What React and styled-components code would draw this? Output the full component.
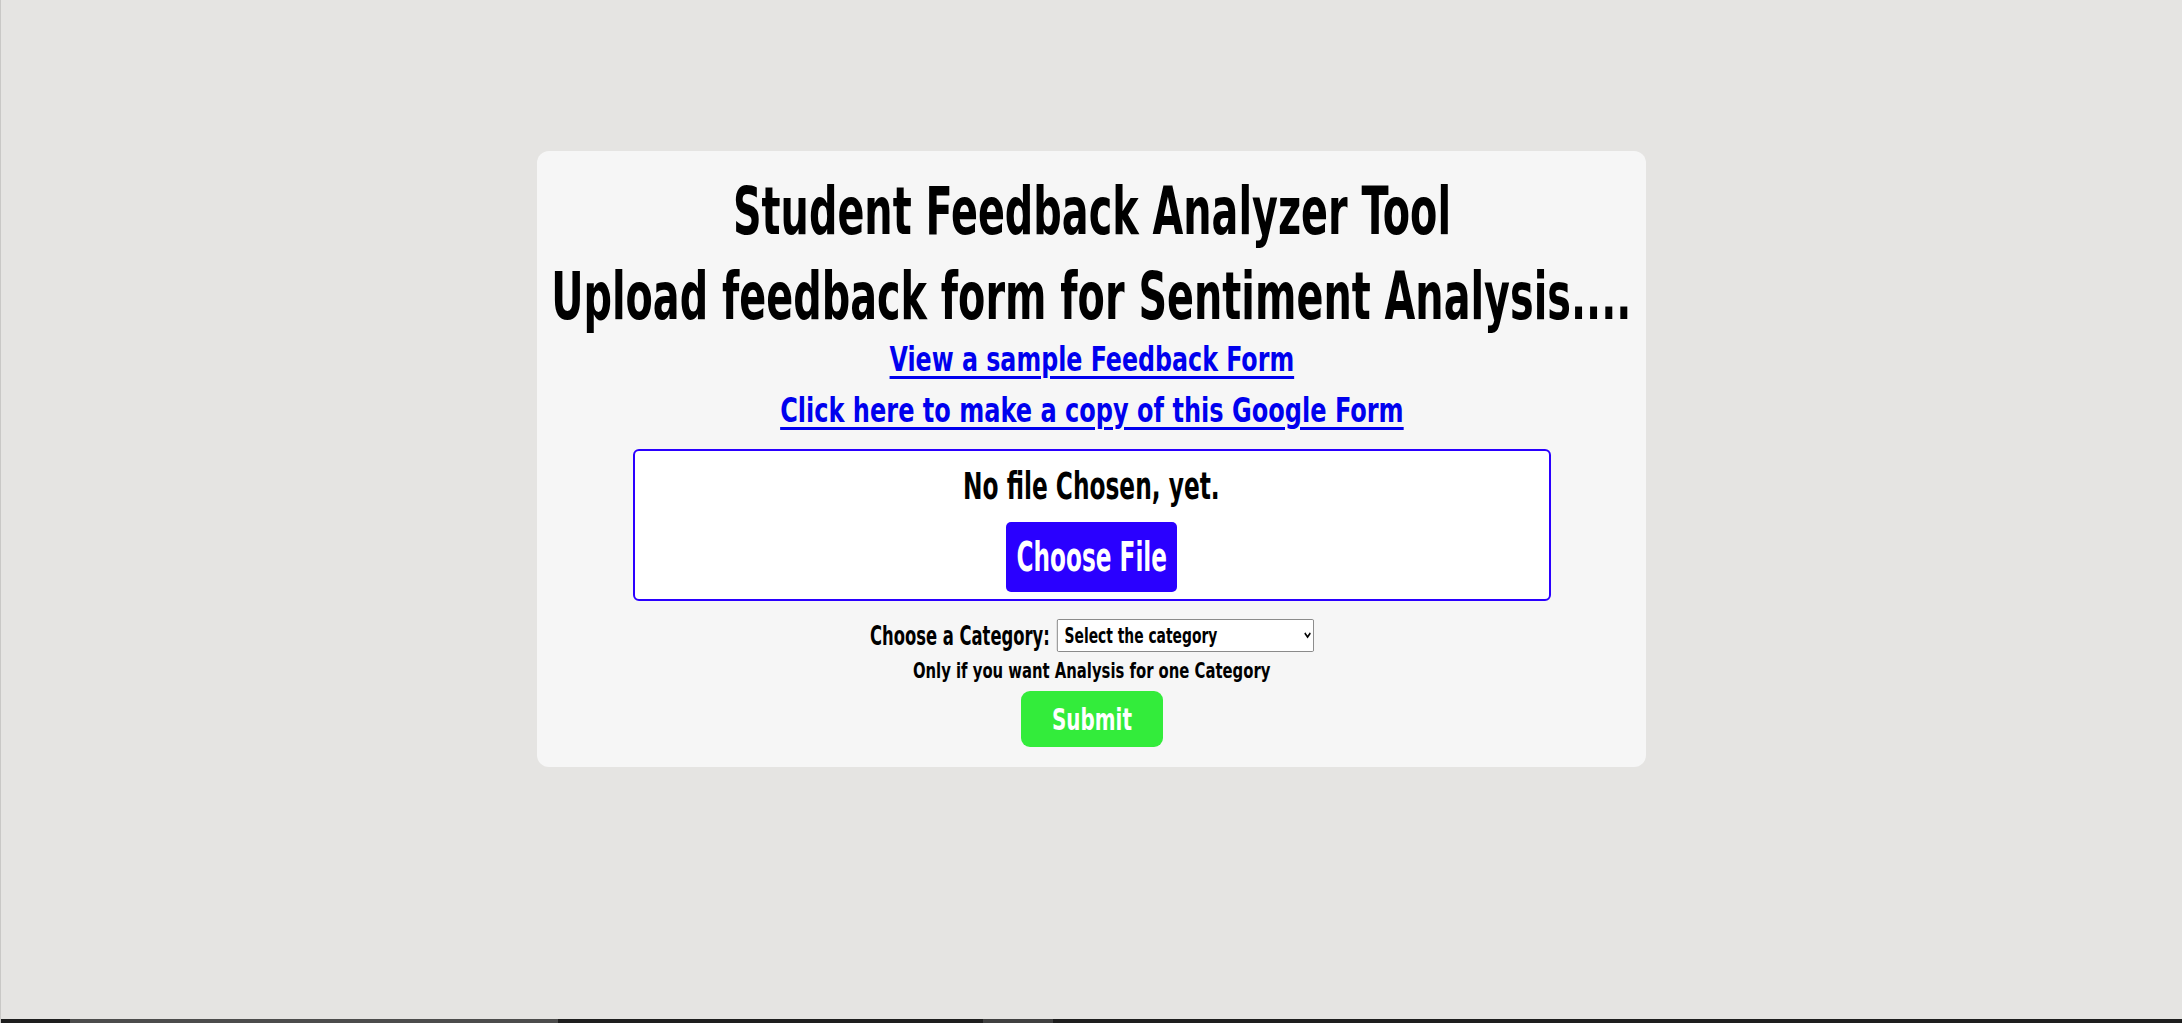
import React from "react";
import styled, { createGlobalStyle } from "styled-components";

// Oswald is not installed, so DejaVu Sans Condensed Bold is sized to the
// reference cap heights and squeezed horizontally with scaleX.
const Global = createGlobalStyle`
  html, body {
    margin: 0;
    padding: 0;
  }
  body {
    background: #e5e4e2;
    font-family: "DejaVu Sans Condensed", "DejaVu Sans", sans-serif;
    font-weight: 700;
  }
`;

const Page = styled.div`
  height: 100vh;
  display: flex;
  flex-direction: column;
  border-left: 1px solid #c9c8c6;
  box-sizing: border-box;
  overflow: hidden;
`;

const Main = styled.main`
  flex: 1;
  display: flex;
  justify-content: center;
  align-items: flex-start;
  padding-top: 151px;
`;

const Card = styled.div`
  width: 1109px;
  box-sizing: border-box;
  background: #f6f6f6;
  border-radius: 12px;
  padding: 18px 0 20px;
  display: flex;
  flex-direction: column;
  align-items: center;
  text-align: center;
`;

const Title = styled.h1`
  margin: 0;
  font-size: 65px;
  line-height: 85px;
  font-weight: 700;
  color: #000;
  white-space: nowrap;
  transform: scaleX(0.68);
`;

const Links = styled.div`
  display: flex;
  flex-direction: column;
  align-items: center;
  gap: 11px;
  margin-top: 1px;
`;

const Link = styled.a`
  font-size: 33px;
  line-height: 40px;
  font-weight: 700;
  color: #0000ee;
  white-space: nowrap;
  text-decoration: underline;
  text-decoration-thickness: 3px;
  text-underline-offset: 5px;
  transform: scaleX(${(p) => p.k});
`;

const Upload = styled.div`
  margin-top: 18px;
  width: 918px;
  box-sizing: border-box;
  border: 2px solid #2a00ff;
  border-radius: 6px;
  background: #fff;
  padding: 17px 0 7px;
  display: flex;
  flex-direction: column;
  align-items: center;
  gap: 17px;
`;

const FileStatus = styled.div`
  font-size: 37px;
  line-height: 37px;
  color: #000;
  white-space: nowrap;
  transform: scaleX(0.7);
`;

const FileButton = styled.label`
  width: 171px;
  height: 70px;
  border-radius: 5px;
  background: #2a00ff;
  color: #fff;
  font-size: 40px;
  display: flex;
  align-items: center;
  justify-content: center;
  cursor: pointer;
`;

const Squeeze = styled.span`
  display: inline-block;
  white-space: nowrap;
  transform: scaleX(${(p) => p.k});
`;

const CategoryRow = styled.div`
  margin-top: 18px;
  height: 33px;
  display: flex;
  align-items: center;
  gap: 10px;
  transform: scaleX(0.7);
`;

const Label = styled.label`
  font-size: 26px;
  color: #000;
  white-space: nowrap;
`;

const Select = styled.select`
  width: 367px;
  height: 33px;
  font-family: inherit;
  font-size: 22px;
  font-weight: 700;
  color: #000;
  background: #fff;
  border: 1px solid #767676;
  border-radius: 2px;
  padding: 0 6px;
`;

const Note = styled.p`
  margin: 8px 0 0;
  font-size: 21px;
  line-height: 22px;
  color: #000;
  white-space: nowrap;
  transform: scaleX(0.785);
`;

const Submit = styled.button`
  margin-top: 9px;
  width: 142px;
  height: 56px;
  border: none;
  border-radius: 9px;
  background: #33ec3b;
  color: #fff;
  font-family: inherit;
  font-size: 31px;
  font-weight: 700;
  padding: 0;
  cursor: pointer;
`;

const Scrollbar = styled.div`
  height: 4px;
  flex-shrink: 0;
  background: #1e1e1e;
  display: flex;
`;

const Thumb = styled.div`
  width: ${(p) => p.w}px;
  margin-left: ${(p) => p.at}px;
  background: ${(p) => p.c};
`;

const App = () => {
  return (
    <Page>
      <Global />
      <Main>
        <Card>
          <Title>Student Feedback Analyzer Tool</Title>
          <Title>Upload feedback form for Sentiment Analysis....</Title>
          <Links>
            <Link href="#" k={0.8}>View a sample Feedback Form</Link>
            <Link href="#" k={0.81}>Click here to make a copy of this Google Form</Link>
          </Links>
          <Upload>
            <FileStatus>No file Chosen, yet.</FileStatus>
            <FileButton>
              <Squeeze k={0.645}>Choose File</Squeeze>
            </FileButton>
          </Upload>
          <CategoryRow>
            <Label htmlFor="cat">Choose a Category:</Label>
            <Select id="cat" defaultValue="">
              <option value="">Select the category</option>
              <option value="teaching">Teaching</option>
              <option value="course">Course Content</option>
              <option value="lab">Lab</option>
            </Select>
          </CategoryRow>
          <Note>Only if you want Analysis for one Category</Note>
          <Submit type="button">
            <Squeeze k={0.715}>Submit</Squeeze>
          </Submit>
        </Card>
      </Main>
      <Scrollbar>
        <Thumb at={69} w={488} c="#4c4c4c" />
        <Thumb at={425} w={70} c="#404040" />
      </Scrollbar>
    </Page>
  );
};

export default App;
